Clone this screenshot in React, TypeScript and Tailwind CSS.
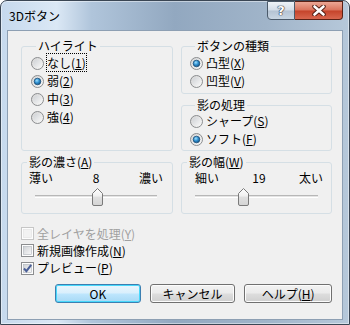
import React from 'react';

function Radio({ checked }: { checked?: boolean }) {
  return (
    <svg width="13" height="13" viewBox="0 0 13 13" className="shrink-0">
      <defs>
        <linearGradient id="rOuter" x1="0" y1="0" x2="1" y2="1">
          <stop offset="0" stopColor="#d2d2d2" />
          <stop offset="1" stopColor="#fbfbfb" />
        </linearGradient>
        <linearGradient id="rInner" x1="0" y1="0" x2="1" y2="1">
          <stop offset="0" stopColor="#cfd2d6" />
          <stop offset="1" stopColor="#f6f6f6" />
        </linearGradient>
        <radialGradient id="rDot" cx="0.4" cy="0.35" r="0.7">
          <stop offset="0" stopColor="#9fe1ff" />
          <stop offset="0.5" stopColor="#2f8fd0" />
          <stop offset="1" stopColor="#14507f" />
        </radialGradient>
      </defs>
      <circle cx="6.5" cy="6.5" r="6" fill="url(#rOuter)" stroke="#8b8d8f" />
      <circle cx="6.5" cy="6.5" r="4" fill="url(#rInner)" />
      {checked && <circle cx="6.5" cy="6.5" r="3.3" fill="url(#rDot)" stroke="#1d4f78" strokeWidth="0.8" />}
    </svg>
  );
}

function Check({ checked, disabled }: { checked?: boolean; disabled?: boolean }) {
  return (
    <svg width="13" height="13" viewBox="0 0 13 13" className="shrink-0">
      <defs>
        <linearGradient id="cInner" x1="0" y1="0" x2="1" y2="1">
          <stop offset="0" stopColor="#cfd2d6" />
          <stop offset="1" stopColor="#f8f8f8" />
        </linearGradient>
      </defs>
      <rect x="0.5" y="0.5" width="12" height="12" fill="#fdfdfd" stroke={disabled ? '#c6c6c6' : '#8b8d8f'} />
      <rect x="2.5" y="2.5" width="8" height="8" fill={disabled ? '#f2f2f2' : 'url(#cInner)'} stroke={disabled ? '#e2e2e2' : '#aeb3b9'} strokeWidth="0.6" />
      {checked && <path d="M3 6.5 L5.4 9.2 L10.2 2.8" fill="none" stroke="#4a5f97" strokeWidth="2" />}
    </svg>
  );
}

function Thumb() {
  return (
    <svg width="11" height="18" viewBox="0 0 11 18">
      <defs>
        <linearGradient id="tFill" x1="0" y1="0" x2="0" y2="1">
          <stop offset="0" stopColor="#ffffff" />
          <stop offset="0.45" stopColor="#f0f0f0" />
          <stop offset="0.5" stopColor="#e0e0e0" />
          <stop offset="1" stopColor="#d4d4d4" />
        </linearGradient>
      </defs>
      <path d="M0.5 5.5 L5.5 0.5 L10.5 5.5 V16 Q10.5 17.5 9 17.5 H2 Q0.5 17.5 0.5 16 Z" fill="url(#tFill)" stroke="#7a7a7a" />
    </svg>
  );
}

function Group({ title, className, children }: { title: React.ReactNode; className: string; children?: React.ReactNode }) {
  return (
    <fieldset className={`border border-[#d5dfe5] rounded-[3px] min-w-0 ${className}`}>
      <legend className="ml-[5px] px-[2px] text-[12px] leading-[14px]">{title}</legend>
      {children}
    </fieldset>
  );
}

function RadioRow({ checked, children }: { checked?: boolean; children: React.ReactNode }) {
  return (
    <div className="flex items-center h-[18px] gap-[3px]">
      <Radio checked={checked} />
      <span className="text-[12px] leading-[14px]">{children}</span>
    </div>
  );
}

function Slider({ left, value, right, labelPad, trackPad, thumbAt }: { left: string; value: string; right: string; labelPad: string; trackPad: string; thumbAt: number }) {
  return (
    <div>
      <div className={`flex justify-between text-[12px] leading-[14px] mt-[2px] ${labelPad}`}>
        <span>{left}</span>
        <span>{value}</span>
        <span>{right}</span>
      </div>
      <div className={`mt-[3px] ${trackPad}`}>
        <div className="relative h-[18px]">
          <div className="absolute left-0 right-0 top-[7px] h-[3px] border-t border-[#b7b7b7] border-b border-b-white bg-[#e4e4e4]" />
          <div className="absolute top-0" style={{ left: thumbAt }}>
            <Thumb />
          </div>
        </div>
      </div>
    </div>
  );
}

function U({ children }: { children: React.ReactNode }) {
  return <span className="underline underline-offset-[1px]">{children}</span>;
}

export default function App() {
  return (
    <div className="w-[350px] h-[325px] font-['Noto_Sans_CJK_JP',sans-serif] text-black">
      <div className="w-[350px] h-[325px] flex flex-col border border-[#3a4654] rounded-t-[7px] bg-[linear-gradient(90deg,#c6d9ed_0%,#dbe8f5_16%,#b0c5db_26%,#92a8c0_50%,#a0b4c9_76%,#b6c8da_100%)] shadow-[inset_0_0_0_1px_rgba(255,255,255,0.45)]">
        {/* title bar */}
        <div className="h-[29px] flex items-start shrink-0">
          <div className="pl-[8px] pt-[8px] text-[12px] leading-[14px] text-black">3Dボタン</div>
          <div className="ml-auto mr-[6px] flex h-[19px]">
            <div className="w-[28px] h-[19px] flex items-center justify-center border border-[#4b5a6a] rounded-bl-[4px] bg-[linear-gradient(180deg,#eef3f8_0%,#d3dde8_48%,#b4c3d3_52%,#c9d6e3_100%)]">
              <span className="text-[13px] leading-[13px] font-bold text-white [text-shadow:0_0_1px_#223,0_0_1px_#223,0_0_1px_#223] font-['DejaVu_Sans',sans-serif]">?</span>
            </div>
            <div className="w-[48px] h-[19px] flex items-center justify-center border border-l-0 border-[#5b2115] rounded-br-[4px] bg-[linear-gradient(180deg,#eba795_0%,#d9735c_48%,#c5432a_52%,#d8674f_100%)]">
              <svg width="14" height="11" viewBox="0 0 14 11">
                <path d="M2.5 1.5 L11.5 9.5 M11.5 1.5 L2.5 9.5" stroke="#4a1a10" strokeWidth="4.4" strokeLinecap="round" />
                <path d="M2.5 1.5 L11.5 9.5 M11.5 1.5 L2.5 9.5" stroke="#ffffff" strokeWidth="2.6" strokeLinecap="round" />
              </svg>
            </div>
          </div>
        </div>

        {/* client area */}
        <div className="ml-[6px] w-[336px] h-[290px] border border-[#8d9fb3] bg-[#f0f0f0] pl-[13px] pr-[10px] pt-[8px] flex flex-col shrink-0">
          <div className="grid grid-cols-[152px_151px] gap-x-[8px]">
            <Group title="ハイライト" className="h-[112px] pl-[9px]">
              <div className="pt-[1px]">
                <RadioRow>
                  <span className="outline outline-1 outline-dotted outline-black">なし(<U>1</U>)</span>
                </RadioRow>
                <RadioRow checked>弱(<U>2</U>)</RadioRow>
                <RadioRow>中(<U>3</U>)</RadioRow>
                <RadioRow>強(<U>4</U>)</RadioRow>
              </div>
            </Group>
            <div className="flex flex-col gap-[4px]">
              <Group title="ボタンの種類" className="h-[55px] pl-[8px]">
                <div className="pt-[1px]">
                  <RadioRow checked>凸型(<U>X</U>)</RadioRow>
                  <RadioRow>凹型(<U>V</U>)</RadioRow>
                </div>
              </Group>
              <Group title="影の処理" className="h-[53px] pl-[8px]">
                <RadioRow>シャープ(<U>S</U>)</RadioRow>
                <RadioRow checked>ソフト(<U>F</U>)</RadioRow>
              </Group>
            </div>
          </div>

          <div className="grid grid-cols-[152px_151px] gap-x-[8px] mt-[4px]">
            <Group title={<>影の濃さ(<U>A</U>)</>} className="h-[59px]">
              <Slider left="薄い" value="8" right="濃い" labelPad="pl-[7px] pr-[9px]" trackPad="pl-[13px] pr-[15px]" thumbAt={57} />
            </Group>
            <Group title={<>影の幅(<U>W</U>)</>} className="h-[59px]">
              <Slider left="細い" value="19" right="太い" labelPad="pl-[13px] pr-[8px]" trackPad="pl-[13px] pr-[13px]" thumbAt={43} />
            </Group>
          </div>

          <div className="mt-[11px] flex flex-col text-[12px] leading-[14px]">
            <div className="flex items-center h-[17px] gap-[3px] text-[#a0a0a0]">
              <Check disabled />
              <span>全レイヤを処理(<U>Y</U>)</span>
            </div>
            <div className="flex items-center h-[17px] gap-[3px]">
              <Check />
              <span>新規画像作成(<U>N</U>)</span>
            </div>
            <div className="flex items-center h-[18px] gap-[3px]">
              <Check checked />
              <span>プレビュー(<U>P</U>)</span>
            </div>
          </div>

          <div className="mt-[7px] ml-[34px] flex gap-[9px] text-[12px] leading-[14px]">
            <button className="w-[86px] h-[19px] rounded-[3px] border border-[#3c7fb1] shadow-[inset_0_0_0_1px_#48d8fb] bg-[linear-gradient(180deg,#eaf6fd_0%,#d9effc_48%,#bee6fd_52%,#a7d9f5_100%)] flex items-center justify-center">
              OK
            </button>
            <button className="w-[86px] h-[19px] rounded-[3px] border border-[#707070] shadow-[inset_0_0_0_1px_#fcfcfc] bg-[linear-gradient(180deg,#f2f2f2_0%,#ebebeb_48%,#dddddd_52%,#cfcfcf_100%)] flex items-center justify-center">
              キャンセル
            </button>
            <button className="w-[88px] h-[19px] rounded-[3px] border border-[#707070] shadow-[inset_0_0_0_1px_#fcfcfc] bg-[linear-gradient(180deg,#f2f2f2_0%,#ebebeb_48%,#dddddd_52%,#cfcfcf_100%)] flex items-center justify-center">
              ヘルプ(<U>H</U>)
            </button>
          </div>
        </div>
      </div>
    </div>
  );
}
